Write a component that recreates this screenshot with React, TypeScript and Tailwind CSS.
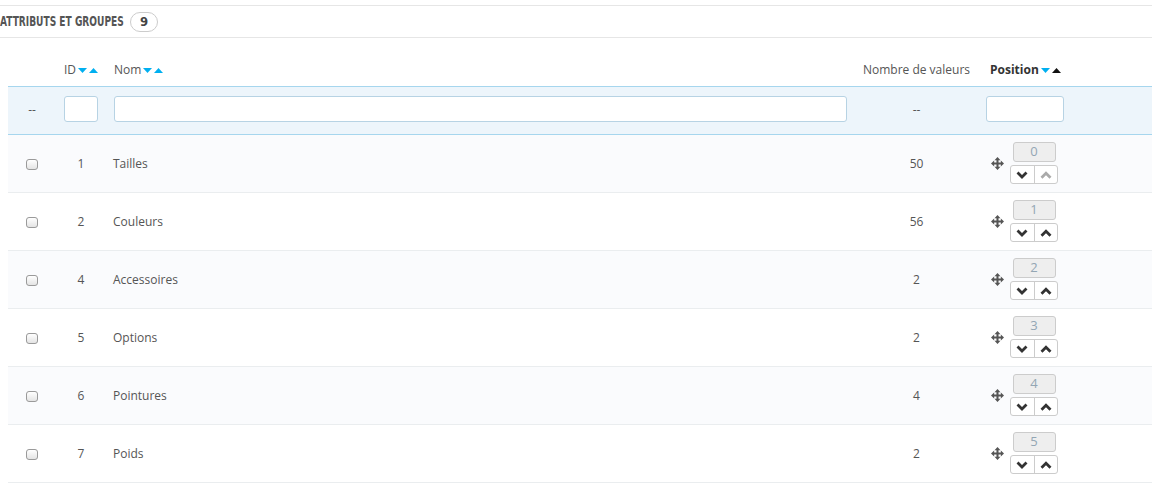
import React from "react";

type Row = { id: number; name: string; count: number; position: number };

const rows: Row[] = [
  { id: 1, name: "Tailles", count: 50, position: 0 },
  { id: 2, name: "Couleurs", count: 56, position: 1 },
  { id: 4, name: "Accessoires", count: 2, position: 2 },
  { id: 5, name: "Options", count: 2, position: 3 },
  { id: 6, name: "Pointures", count: 4, position: 4 },
  { id: 7, name: "Poids", count: 2, position: 5 },
];

const Caret = ({ up, color }: { up?: boolean; color: string }) => (
  <svg width="9" height="5" viewBox="0 0 9 5" className="inline-block">
    <path d={up ? "M0 5 L4.5 0 L9 5 Z" : "M0 0 L9 0 L4.5 5 Z"} fill={color} />
  </svg>
);

const SortIcons = ({ activeUp }: { activeUp?: boolean }) => (
  <span className="ml-[2px] inline-flex items-center gap-[2px] align-middle">
    <Caret color="#00aff0" />
    <Caret up color={activeUp ? "#111" : "#00aff0"} />
  </span>
);

const MoveIcon = () => (
  <svg width="13" height="13" viewBox="0 0 14 14">
    <path
      d="M7 0 L10.2 3.4 H8.1 V5.9 H10.6 V3.8 L14 7 L10.6 10.2 V8.1 H8.1 V10.6 H10.2 L7 14 L3.8 10.6 H5.9 V8.1 H3.4 V10.2 L0 7 L3.4 3.8 V5.9 H5.9 V3.4 H3.8 Z"
      fill="#555"
    />
  </svg>
);

const Chevron = ({ up, color }: { up?: boolean; color: string }) => (
  <svg width="12" height="8" viewBox="0 0 12 8">
    <polyline
      points={up ? "1.5,6.8 6,2.3 10.5,6.8" : "1.5,1.5 6,6 10.5,1.5"}
      fill="none"
      stroke={color}
      strokeWidth="2.8"
    />
  </svg>
);

const Checkbox = () => (
  <span className="inline-block w-[12px] h-[11px] rounded-[3px] border border-[#9a9a9a] bg-gradient-to-b from-white to-[#e4e4e4]" />
);

export default function App() {
  return (
    <div className="w-[1152px] h-[484px] overflow-hidden bg-white font-['Open_Sans',sans-serif] text-[12px] text-[#555]">
      {/* Panel heading */}
      <div className="mt-[5px] h-[33px] border-t border-b border-[#e6e6e6] flex items-center">
        <span className="w-[121px] whitespace-nowrap">
          <span className="inline-block origin-left scale-x-[0.72] font-['DejaVu_Sans_Condensed',sans-serif] text-[14px] font-bold text-[#555] uppercase">
            Attributs et groupes
          </span>
        </span>
        <span className="ml-[9px] h-[20px] w-[28px] rounded-full border border-[#ccc] flex items-center justify-center font-['DejaVu_Sans_Condensed',sans-serif] text-[13px] font-bold text-[#444]">
          9
        </span>
      </div>

      <div className="pl-[8px]">
        <table className="w-full table-fixed border-collapse">
          <colgroup>
            <col className="w-[48px]" />
            <col className="w-[50px]" />
            <col className="w-[749px]" />
            <col className="w-[123px]" />
            <col />
          </colgroup>
          <thead>
            <tr className="h-[48px]">
              <th className="align-bottom pb-[7px]" />
              <th className="align-bottom pb-[7px] font-normal text-left pl-[8px] whitespace-nowrap">
                ID<SortIcons />
              </th>
              <th className="align-bottom pb-[7px] font-normal text-left pl-[8px] whitespace-nowrap">
                Nom<SortIcons />
              </th>
              <th className="align-bottom pb-[7px] font-normal text-center whitespace-nowrap">
                Nombre de valeurs
              </th>
              <th className="align-bottom pb-[7px] font-bold text-left pl-[12px] text-[#333] whitespace-nowrap">
                Position<SortIcons activeUp />
              </th>
            </tr>
            <tr className="h-[48px] bg-[#edf5fb] border-t border-b border-[#a6d6ee]">
              <th className="font-normal text-center">--</th>
              <th className="text-left pl-[8px] pb-[2px]">
                <input className="block w-[34px] h-[26px] rounded-[3px] border border-[#b7d3e4] bg-white" />
              </th>
              <th className="text-left pl-[8px] pr-[8px] pb-[2px]">
                <input className="block w-full h-[26px] rounded-[3px] border border-[#b7d3e4] bg-white" />
              </th>
              <th className="font-normal text-center">--</th>
              <th className="text-left pl-[8px] pb-[2px]">
                <input className="block w-[78px] h-[26px] rounded-[3px] border border-[#b7d3e4] bg-white" />
              </th>
            </tr>
          </thead>
          <tbody>
            {rows.map((row, i) => (
              <tr
                key={row.id}
                className={
                  "h-[58px] border-b border-[#eaedef] " +
                  (i % 2 === 0 ? "bg-[#fafbfd]" : "bg-white")
                }
              >
                <td className="text-center pt-[1px]">
                  <span className="inline-flex align-middle">
                    <Checkbox />
                  </span>
                </td>
                <td className="text-center pt-[1px]">{row.id}</td>
                <td className="pl-[7px] pt-[1px]">{row.name}</td>
                <td className="text-center pt-[1px]">{row.count}</td>
                <td className="pl-[13px]">
                  <div className="flex items-center">
                    <MoveIcon />
                    <div className="ml-[6px] flex flex-col items-center">
                      <div className="w-[43px] h-[20px] rounded-[3px] border border-[#ccc] bg-[#eee] flex items-center justify-center text-[13px] text-[#93a6b4]">
                        {row.position}
                      </div>
                      <div className="mt-[3px] flex h-[19px] w-[48px] rounded-[3px] border border-[#ccc] bg-white overflow-hidden">
                        <span className="flex-1 flex items-center justify-center border-r border-[#ccc]">
                          <Chevron color="#333" />
                        </span>
                        <span className="flex-1 flex items-center justify-center">
                          <Chevron up color={i === 0 ? "#aaa" : "#333"} />
                        </span>
                      </div>
                    </div>
                  </div>
                </td>
              </tr>
            ))}
          </tbody>
        </table>
      </div>
    </div>
  );
}
